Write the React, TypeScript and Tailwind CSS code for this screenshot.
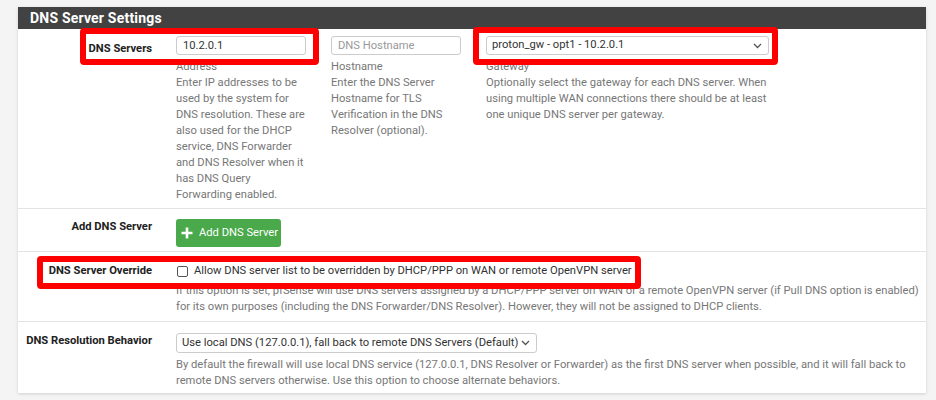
const font = { fontFamily: "Roboto, 'Liberation Sans', sans-serif" };

const Chevron = () => (
  <svg width="9" height="6" viewBox="0 0 9 6" className="shrink-0">
    <path d="M1 1l3.5 3.5L8 1" fill="none" stroke="#555" strokeWidth="1.3" />
  </svg>
);

const Label = ({ children, className = "" }: { children: React.ReactNode; className?: string }) => (
  <div className={`w-[134px] shrink-0 whitespace-nowrap text-right text-[11.2px] font-bold leading-4 text-[#212121] ${className}`}>
    {children}
  </div>
);

const Help = ({ lines, className = "" }: { lines: string[]; className?: string }) => (
  <div className={`text-[11.2px] leading-4 text-[#777] whitespace-nowrap ${className}`}>
    {lines.map((l) => (
      <div key={l}>{l}</div>
    ))}
  </div>
);

const App = () => {
  return (
    <div className="min-h-[400px] w-[936px] bg-[#f4f4f4] pl-[18px] pt-[7px]" style={font}>
      <div className="w-[908px] bg-white shadow-[0_1px_3px_rgba(0,0,0,0.15)]">
        <div className="h-[22px] bg-[#424242] px-3 text-[14px] font-bold leading-[22px] tracking-[0.2px] text-white">
          DNS Server Settings
        </div>

        {/* DNS Servers */}
        <div className="relative flex pt-[7px] pb-[5px]">
          <Label className="pt-[5px]">DNS Servers</Label>
          <div className="ml-6 flex gap-[25px]">
            <div className="w-[130px]">
              <div className="h-[19px] rounded-[3px] border border-[#ccc] px-[6px] text-[11.2px] leading-[17px] text-[#333]">
                10.2.0.1
              </div>
              <Help
                className="mt-[4px]"
                lines={[
                  "Address",
                  "Enter IP addresses to be",
                  "used by the system for",
                  "DNS resolution. These are",
                  "also used for the DHCP",
                  "service, DNS Forwarder",
                  "and DNS Resolver when it",
                  "has DNS Query",
                  "Forwarding enabled.",
                ]}
              />
            </div>
            <div className="w-[130px]">
              <div className="h-[19px] rounded-[3px] border border-[#ccc] px-[6px] text-[11.2px] leading-[17px] text-[#999]">
                DNS Hostname
              </div>
              <Help
                className="mt-[4px]"
                lines={[
                  "Hostname",
                  "Enter the DNS Server",
                  "Hostname for TLS",
                  "Verification in the DNS",
                  "Resolver (optional).",
                ]}
              />
            </div>
            <div className="w-[283px]">
              <div className="flex h-[19px] items-center justify-between rounded-[3px] border border-[#ccc] pl-[5px] pr-[6px] text-[11.2px] text-[#333]">
                <span>proton_gw - opt1 - 10.2.0.1</span>
                <Chevron />
              </div>
              <Help
                className="mt-[4px]"
                lines={[
                  "Gateway",
                  "Optionally select the gateway for each DNS server. When",
                  "using multiple WAN connections there should be at least",
                  "one unique DNS server per gateway.",
                ]}
              />
            </div>
          </div>
          <div className="pointer-events-none absolute left-[62px] top-[-1px] h-[37px] w-[239px] rounded-[4px] border-[6px] border-[#f00]" />
          <div className="pointer-events-none absolute left-[455px] top-[-2px] h-[38px] w-[305px] rounded-[4px] border-[6px] border-[#f00]" />
        </div>

        {/* Add DNS Server */}
        <div className="flex border-t border-[#e3e3e3] pt-[10px] pb-[4px]">
          <Label>Add DNS Server</Label>
          <div className="ml-6">
            <div className="flex h-[28px] w-[105px] items-center gap-[6px] whitespace-nowrap rounded-[3px] bg-[#4aa94a] pl-[5px] text-[11.2px] text-white">
              <svg width="12" height="12" viewBox="0 0 12 12" className="shrink-0">
                <path d="M6 0.5v11M0.5 6h11" stroke="white" strokeWidth="2.6" />
              </svg>
              <span>Add DNS Server</span>
            </div>
          </div>
        </div>

        {/* DNS Server Override */}
        <div className="relative flex border-t border-[#e3e3e3] pt-[11px] pb-[6px]">
          <Label>DNS Server Override</Label>
          <div className="ml-6">
            <div className="flex h-4 items-center gap-[6px] text-[11.2px] text-[#333]">
              <span className="ml-[1px] h-[11px] w-[11px] rounded-[2px] border border-[#555] bg-white" />
              <span className="whitespace-nowrap">
                Allow DNS server list to be overridden by DHCP/PPP on WAN or remote OpenVPN server
              </span>
            </div>
            <Help
              className="mt-[4px]"
              lines={[
                "If this option is set, pfSense will use DNS servers assigned by a DHCP/PPP server on WAN or a remote OpenVPN server (if Pull DNS option is enabled)",
                "for its own purposes (including the DNS Forwarder/DNS Resolver). However, they will not be assigned to DHCP clients.",
              ]}
            />
          </div>
          <div className="pointer-events-none absolute left-[19px] top-[4px] h-[33px] w-[604px] rounded-[4px] border-[6px] border-[#f00]" />
        </div>

        {/* DNS Resolution Behavior */}
        <div className="flex border-t border-[#e3e3e3] pt-[11px] pb-[4px]">
          <Label>DNS Resolution Behavior</Label>
          <div className="ml-6">
            <div className="flex h-[20px] w-[361px] items-center justify-between rounded-[3px] border border-[#ccc] pl-[5px] pr-[6px] text-[11.2px] text-[#333]">
              <span className="whitespace-nowrap">
                Use local DNS (127.0.0.1), fall back to remote DNS Servers (Default)
              </span>
              <Chevron />
            </div>
            <Help
              className="mt-[4px]"
              lines={[
                "By default the firewall will use local DNS service (127.0.0.1, DNS Resolver or Forwarder) as the first DNS server when possible, and it will fall back to",
                "remote DNS servers otherwise. Use this option to choose alternate behaviors.",
              ]}
            />
          </div>
        </div>
      </div>
    </div>
  );
};

export default App;
